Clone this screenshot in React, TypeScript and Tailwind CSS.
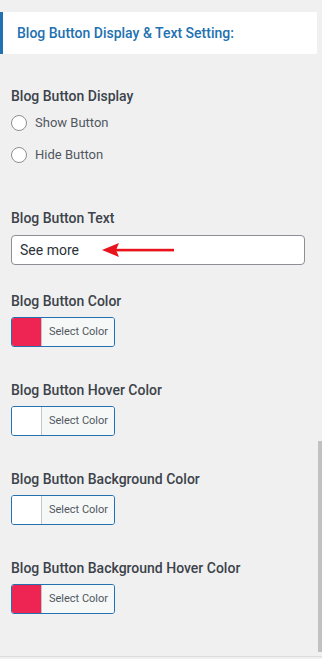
import React from "react";

const font = { fontFamily: "Roboto, 'Liberation Sans', sans-serif" };

function Label({ children, className = "" }: { children: React.ReactNode; className?: string }) {
  return (
    <div className={`text-[14px] leading-[20px] font-medium text-[#3c434a] ${className}`}>{children}</div>
  );
}

function Radio({ label, className = "" }: { label: string; className?: string }) {
  return (
    <div className={`flex items-center h-[20px] ${className}`}>
      <span className="w-[16px] h-[16px] rounded-full border border-[#8c8f94] bg-white shrink-0" />
      <span className="ml-[8px] text-[13px] text-[#50575e]">{label}</span>
    </div>
  );
}

function ColorButton({ color, className = "" }: { color: string; className?: string }) {
  return (
    <div className={`flex w-[104px] h-[30px] rounded-[3px] border border-[#2271b1] overflow-hidden ${className}`}>
      <div className="w-[30px] h-full border-r border-[#c3c4c7]" style={{ backgroundColor: color }} />
      <div className="flex-1 bg-[#f6f7f7] flex items-center justify-center text-[11px] text-[#50575e] pl-[1px]">
        Select Color
      </div>
    </div>
  );
}

export default function App() {
  return (
    <div className="relative w-[322px] h-[659px] bg-[#f0f0f1] overflow-hidden" style={font}>
      <div className="pt-[12px]">
        <div className="w-[317px] h-[42px] bg-white border-l-[3px] border-[#2271b1] flex items-center pl-[14px]">
          <span className="text-[14px] font-medium text-[#2271b1]">Blog Button Display &amp; Text Setting:</span>
        </div>
      </div>
      <div className="px-[11px] flex flex-col">
        <Label className="mt-[32px]">Blog Button Display</Label>
        <Radio label="Show Button" className="mt-[7px]" />
        <Radio label="Hide Button" className="mt-[12px]" />

        <Label className="mt-[43px]">Blog Button Text</Label>
        <div className="mt-[7px] w-[294px] h-[30px] rounded-[4px] border border-[#8c8f94] bg-white flex items-center pl-[8px] relative">
          <span className="text-[14px] text-[#2c3338]">See more</span>
          <svg className="absolute left-[90px] top-[6px]" width="74" height="16" viewBox="0 0 74 16">
            <polygon points="0,8 17,1 14,8 17,15" fill="#e8131b" />
            <rect x="13" y="6.8" width="59" height="2.6" fill="#e8131b" />
          </svg>
        </div>

        <Label className="mt-[26px]">Blog Button Color</Label>
        <ColorButton color="#ee2553" className="mt-[6px]" />

        <Label className="mt-[33px]">Blog Button Hover Color</Label>
        <ColorButton color="#ffffff" className="mt-[6px]" />

        <Label className="mt-[33px]">Blog Button Background Color</Label>
        <ColorButton color="#ffffff" className="mt-[6px]" />

        <Label className="mt-[33px]">Blog Button Background Hover Color</Label>
        <ColorButton color="#ee2553" className="mt-[6px]" />
      </div>
      <div className="absolute right-0 top-[441px] w-[4px] h-[211px] bg-[#c1c1c1]" />
      <div className="absolute left-0 right-0 top-[656px] h-[1px] bg-[#dcdcde]" />
    </div>
  );
}
